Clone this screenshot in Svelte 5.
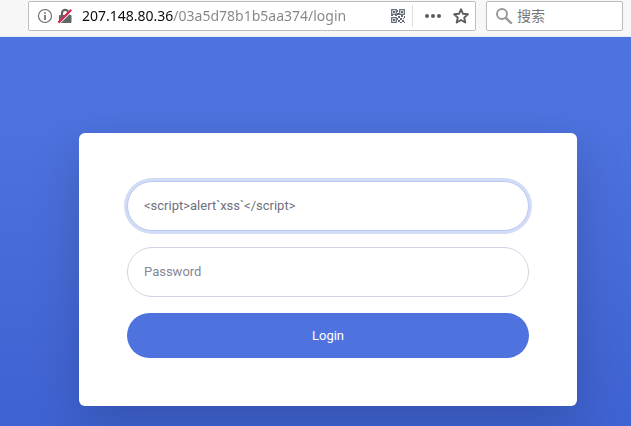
<script>
  let address = $state('207.148.80.36/03a5d78b1b5aa374/login');
  let query = $state('');
  let username = $state('<script>alert`xss`<' + '/script>');
  let password = $state('');
</script>

<div class="window">
  <header class="toolbar">
    <div class="field address">
      <svg width="16" height="16" viewBox="0 0 16 16" aria-hidden="true">
        <circle cx="8" cy="8" r="6.5" fill="none" stroke="#666" stroke-width="1.1" />
        <path d="M7.2 4.2h1.6v1.6H7.2zM7.2 7h1.6v5H7.2z" fill="#666" />
      </svg>
      <svg class="lock" width="16" height="16" viewBox="0 0 16 16" aria-hidden="true">
        <path d="M5 8V5a3.2 3.2 0 0 1 6.4 0v3" fill="none" stroke="#606664" stroke-width="2.2" />
        <rect x="2" y="7" width="12.5" height="8" rx="1" fill="#606664" />
        <path d="M2.4 15.6 15.6 2.4" stroke="#fff" stroke-width="1.2" />
        <path d="M1.4 14.6 14.2 1.8" stroke="#d7264c" stroke-width="2.2" />
      </svg>
      <input class="url" type="text" aria-label="Address" spellcheck="false" bind:value={address} />
      <button class="icon" aria-label="QR code">
        <svg width="15" height="16" viewBox="0 0 15 16">
          <path
            d="M1.7 1.7h4.6v4.6H1.7zM9.7 1.7h4.6v4.6H9.7zM1.7 9.7h4.6v4.6H1.7z"
            fill="none"
            stroke="#6b7080"
            stroke-width="1.3"
          />
          <path
            d="M3 3h2v2H3zM11 3h2v2h-2zM3 11h2v2H3zM7 2h1v2H7zM7 5h2v2H7zM1 7h2v1H1zM5 7h2v1H5zM8 8h2v2H8zM11 7h2v2h-2zM14 8h1v2h-1zM7 10h1v2H7zM10 10h2v2h-2zM13 10h1v1h-1zM8 12h2v2H8zM12 12h2v2h-2zM10 14h2v1h-2zM14 14h1v1h-1z"
            fill="#626774"
          />
        </svg>
      </button>
      <span class="divider"></span>
      <button class="icon" aria-label="Page actions">
        <svg width="16" height="16" viewBox="0 0 16 16" fill="#5c5c5c">
          <circle cx="2" cy="8" r="2" /><circle cx="8" cy="8" r="2" /><circle cx="14" cy="8" r="2" />
        </svg>
      </button>
      <button class="icon star" aria-label="Bookmark this page">
        <svg width="16" height="16" viewBox="0 0 16 16">
          <path
            d="M8 1.3 10 5.8l4.9.5-3.7 3.3 1.1 4.9L8 12l-4.3 2.5 1.1-4.9L1.1 6.3 6 5.8z"
            fill="none"
            stroke="#5c5c5c"
            stroke-width="1.9"
            stroke-linejoin="round"
          />
        </svg>
      </button>
    </div>
    <div class="field search">
      <svg width="18" height="18" viewBox="0 0 18 18" aria-hidden="true">
        <circle cx="7" cy="7" r="5" fill="none" stroke="#999" stroke-width="2" />
        <path d="M10.8 10.8 16 16" stroke="#999" stroke-width="2.4" stroke-linecap="round" />
      </svg>
      <input type="text" aria-label="搜索" placeholder="搜索" bind:value={query} />
    </div>
  </header>

  <main>
    <form class="card" onsubmit={(e) => e.preventDefault()}>
      <input class="pill focused" type="text" aria-label="Username" spellcheck="false" bind:value={username} />
      <input class="pill" type="password" aria-label="Password" placeholder="Password" bind:value={password} />
      <button class="login" type="submit">Login</button>
    </form>
  </main>
</div>

<style>
  :global(body) {
    margin: 0;
  }
  .window {
    display: flex;
    flex-direction: column;
    min-height: 100vh;
  }
  .window,
  .window * {
    box-sizing: border-box;
  }
  svg {
    display: block;
    flex: none;
  }
  input,
  button {
    margin: 0;
    outline: none;
  }
  .toolbar {
    display: flex;
    gap: 10px;
    padding: 1px 8px 5px 28px;
    background: #f7f7f7;
    border-bottom: 1px solid #e6ebf5;
  }
  .field {
    display: flex;
    align-items: center;
    height: 30px;
    border: 1px solid #bebebe;
    border-radius: 2px;
    background: #fff;
  }
  .address {
    flex: 1;
    min-width: 0;
    padding: 0 6px 0 8px;
  }
  .lock {
    margin: 0 9px 0 4px;
  }
  .field input {
    flex: 1;
    min-width: 0;
    height: 28px;
    padding: 0;
    border: 0;
    background: transparent;
    font: 14px/28px "Noto Sans", "Noto Sans CJK SC", sans-serif;
  }
  /* The host is black and the path after it is grey. */
  .field .url {
    background: linear-gradient(90deg, #0c0c0d 91px, #858585 91px);
    -webkit-background-clip: text;
    background-clip: text;
    color: transparent;
    caret-color: #0c0c0d;
  }
  .icon {
    display: flex;
    padding: 0;
    border: 0;
    background: none;
  }
  .divider {
    width: 1px;
    height: 22px;
    margin: 0 12px 0 7px;
    background: #dedede;
  }
  .star {
    margin-left: 12px;
  }
  .search {
    width: 137px;
    gap: 4px;
    padding: 0 8px;
  }
  .field input::placeholder {
    color: #777;
    opacity: 1;
  }
  main {
    flex: 1;
    padding: 96px 54px 20px 79px;
    background: linear-gradient(180deg, #4e73df 20%, #3e62d1 100%);
    overflow: hidden;
  }
  .card {
    display: flex;
    flex-direction: column;
    gap: 16px;
    padding: 48px;
    border-radius: 6px;
    background: #fff;
    box-shadow: 0 16px 48px rgba(0, 0, 0, 0.175);
  }
  .pill {
    width: 100%;
    height: 50px;
    padding: 0 16px 2px;
    border: 1px solid #d1d3e2;
    border-radius: 25px;
    background: #fff;
    color: #6e707e;
    font: 13px/20px Roboto, sans-serif;
  }
  .pill::placeholder {
    color: #858796;
    opacity: 1;
  }
  .focused {
    border-color: #bac8f3;
    box-shadow: 0 0 0 3px #d2dcf7;
  }
  .login {
    height: 45px;
    border: 0;
    border-radius: 23px;
    background: #4e73df;
    color: #fff;
    font: 13px/20px Roboto, sans-serif;
  }
</style>
